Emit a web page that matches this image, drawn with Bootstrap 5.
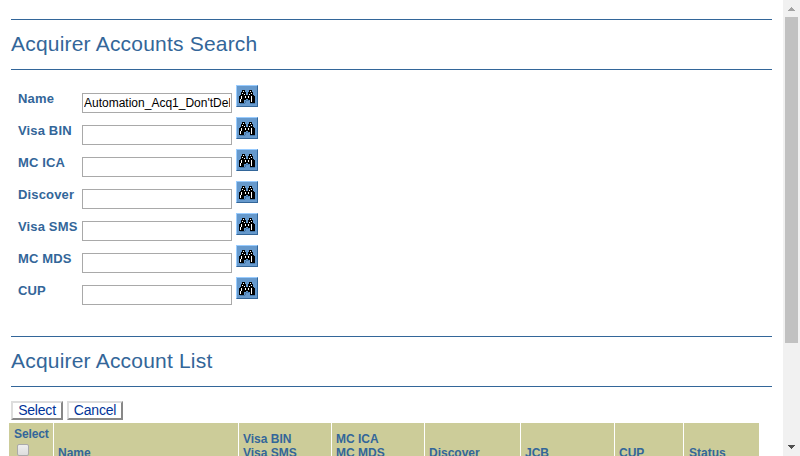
<!DOCTYPE html>
<html lang="en">
<head>
<meta charset="utf-8">
<title>Acquirer Accounts</title>
<link href="https://cdn.jsdelivr.net/npm/bootstrap@5.3.0/dist/css/bootstrap.min.css" rel="stylesheet">
<style>
body{font-family:"Liberation Sans",Arial,sans-serif;color:#369;height:456px;background:#fff}
.pane{width:783px;height:456px;padding-left:11px}
.title-bar{width:761px;height:51px;border-top:1px solid #369;border-bottom:1px solid #369;font-size:21px;letter-spacing:.2px;line-height:48px}
.title-first{margin-top:19px}
.fields{margin-top:15px;padding-left:7px}
.field{height:32px}
.field label{width:64px;font-size:13px;font-weight:700;line-height:16px;padding-top:6px;letter-spacing:.15px;white-space:nowrap}
.field .form-control{width:150px;height:20px;margin-top:8px;border:1px solid #a9a9a9;border-radius:0;padding:0 1px;font-size:12px;line-height:18px;color:#000;min-height:0}
.find{width:22px;height:22px;margin-left:4px;background:#69c;border:1px solid;border-color:#9cf #369 #369 #9cf;padding:0}
.find svg{display:block;margin:1px 0 0 2px}
.title-list{margin-top:27px}
.actions{margin-top:14px;gap:4px}
.actions .btn{height:19px;border:2px solid;border-color:#ddd #888 #888 #ddd;border-radius:0;background:#fff;color:#003399;font-size:14px;line-height:15px;padding:0;letter-spacing:-.2px}
.b-select{width:52px}.b-cancel{width:56px}
.heads{margin:3px 0 0 -2px;width:750px;height:50px;background:#cc9;font-size:12px;font-weight:700;line-height:14px}
.heads>div{border-left:1px solid #fff;padding:23px 0 0 4px;flex:none;white-space:nowrap}
.heads>div:first-child{border-left:0;padding:4px 0 0 5px;letter-spacing:-.1px}
.heads .two{padding-top:9px}
.heads>.h8c{padding-left:5px}
.heads input{appearance:none;display:block;width:12px;height:12px;margin:3px 0 0 3px;border:1px solid #aaa;border-radius:2px;background:linear-gradient(#eee,#ddd)}
.h1c{width:44px}.h2c{width:185px}.h3c,.h4c{width:93px}.h5c{width:96px}.h6c{width:94px}.h7c{width:69px}.h8c{width:76px}
.track{width:17px;height:456px;background:#f1f1f1}
.thumb{width:13px;height:326px;background:#c1c1c1}
</style>
</head>
<body class="d-flex overflow-hidden">
<svg width="0" height="0" class="d-none">
<symbol id="bino" viewBox="0 0 16 14" shape-rendering="crispEdges">
<path fill="#47a" d="M7 10h3v1H7zM6 11h1v2H6zM1 13h5v1H1zM11 13h5v1h-5z"/>
<path d="M3 0h3v2h1v3h2V2h1V0h3v2h1v3h1v1h1v7h-5v-3H9V9H7v1H5v3H0V6h1V5h1V2h1z"/>
<path fill="#69c" d="M5 10h1v3H5zM10 10h1v3h-1zM0 5h1v1H0z"/>
<path fill="#fff" d="M4 1h1v1H4zM11 1h1v1h-1zM3 3h1v1H3zM5 4h1v1H5zM12 3h1v1h-1zM10 4h1v1h-1zM2 6h1v3H2zM6 6h1v2H6zM9 6h1v2H9zM12 6h1v3h-1zM1 9h1v3H1zM12 9h1v3h-1z"/>
</symbol>
</svg>
<main class="pane flex-shrink-0 overflow-hidden">
<h1 class="title-bar title-first mb-0 fw-normal">Acquirer Accounts Search</h1>
<form class="fields">
<div class="field d-flex align-items-start"><label for="f1">Name</label><input class="form-control" id="f1" value="Automation_Acq1_Don'tDelete"><button type="button" class="find"><svg width="16" height="14"><use href="#bino"/></svg></button></div>
<div class="field d-flex align-items-start"><label for="f2">Visa BIN</label><input class="form-control" id="f2"><button type="button" class="find"><svg width="16" height="14"><use href="#bino"/></svg></button></div>
<div class="field d-flex align-items-start"><label for="f3">MC ICA</label><input class="form-control" id="f3"><button type="button" class="find"><svg width="16" height="14"><use href="#bino"/></svg></button></div>
<div class="field d-flex align-items-start"><label for="f4">Discover</label><input class="form-control" id="f4"><button type="button" class="find"><svg width="16" height="14"><use href="#bino"/></svg></button></div>
<div class="field d-flex align-items-start"><label for="f5">Visa SMS</label><input class="form-control" id="f5"><button type="button" class="find"><svg width="16" height="14"><use href="#bino"/></svg></button></div>
<div class="field d-flex align-items-start"><label for="f6">MC MDS</label><input class="form-control" id="f6"><button type="button" class="find"><svg width="16" height="14"><use href="#bino"/></svg></button></div>
<div class="field d-flex align-items-start"><label for="f7">CUP</label><input class="form-control" id="f7"><button type="button" class="find"><svg width="16" height="14"><use href="#bino"/></svg></button></div>
</form>
<h2 class="title-bar title-list mb-0 fw-normal">Acquirer Account List</h2>
<div class="actions d-flex"><button class="btn b-select">Select</button><button class="btn b-cancel">Cancel</button></div>
<div class="heads d-flex">
<div class="h1c">Select<input type="checkbox" aria-label="Select all"></div>
<div class="h2c">Name</div>
<div class="h3c two">Visa BIN<br>Visa SMS</div>
<div class="h4c two">MC ICA<br>MC MDS</div>
<div class="h5c">Discover</div>
<div class="h6c">JCB</div>
<div class="h7c">CUP</div>
<div class="h8c">Status</div>
</div>
</main>
<aside class="track flex-shrink-0 d-flex flex-column align-items-center justify-content-between">
<svg width="17" height="17" shape-rendering="crispEdges" class="flex-shrink-0"><path fill="#a3a3a3" d="M8 7h1v1h1v1h1v1h1v1H5v-1h1V9h1V8h1z"/></svg>
<div class="thumb mb-auto"></div>
<svg width="17" height="17" shape-rendering="crispEdges" class="flex-shrink-0"><path fill="#505050" d="M5 6h7v1h-1v1h-1v1H9v1H8V9H7V8H6V7H5z"/></svg>
</aside>
<script src="https://cdn.jsdelivr.net/npm/bootstrap@5.3.0/dist/js/bootstrap.bundle.min.js"></script>
</body>
</html>
